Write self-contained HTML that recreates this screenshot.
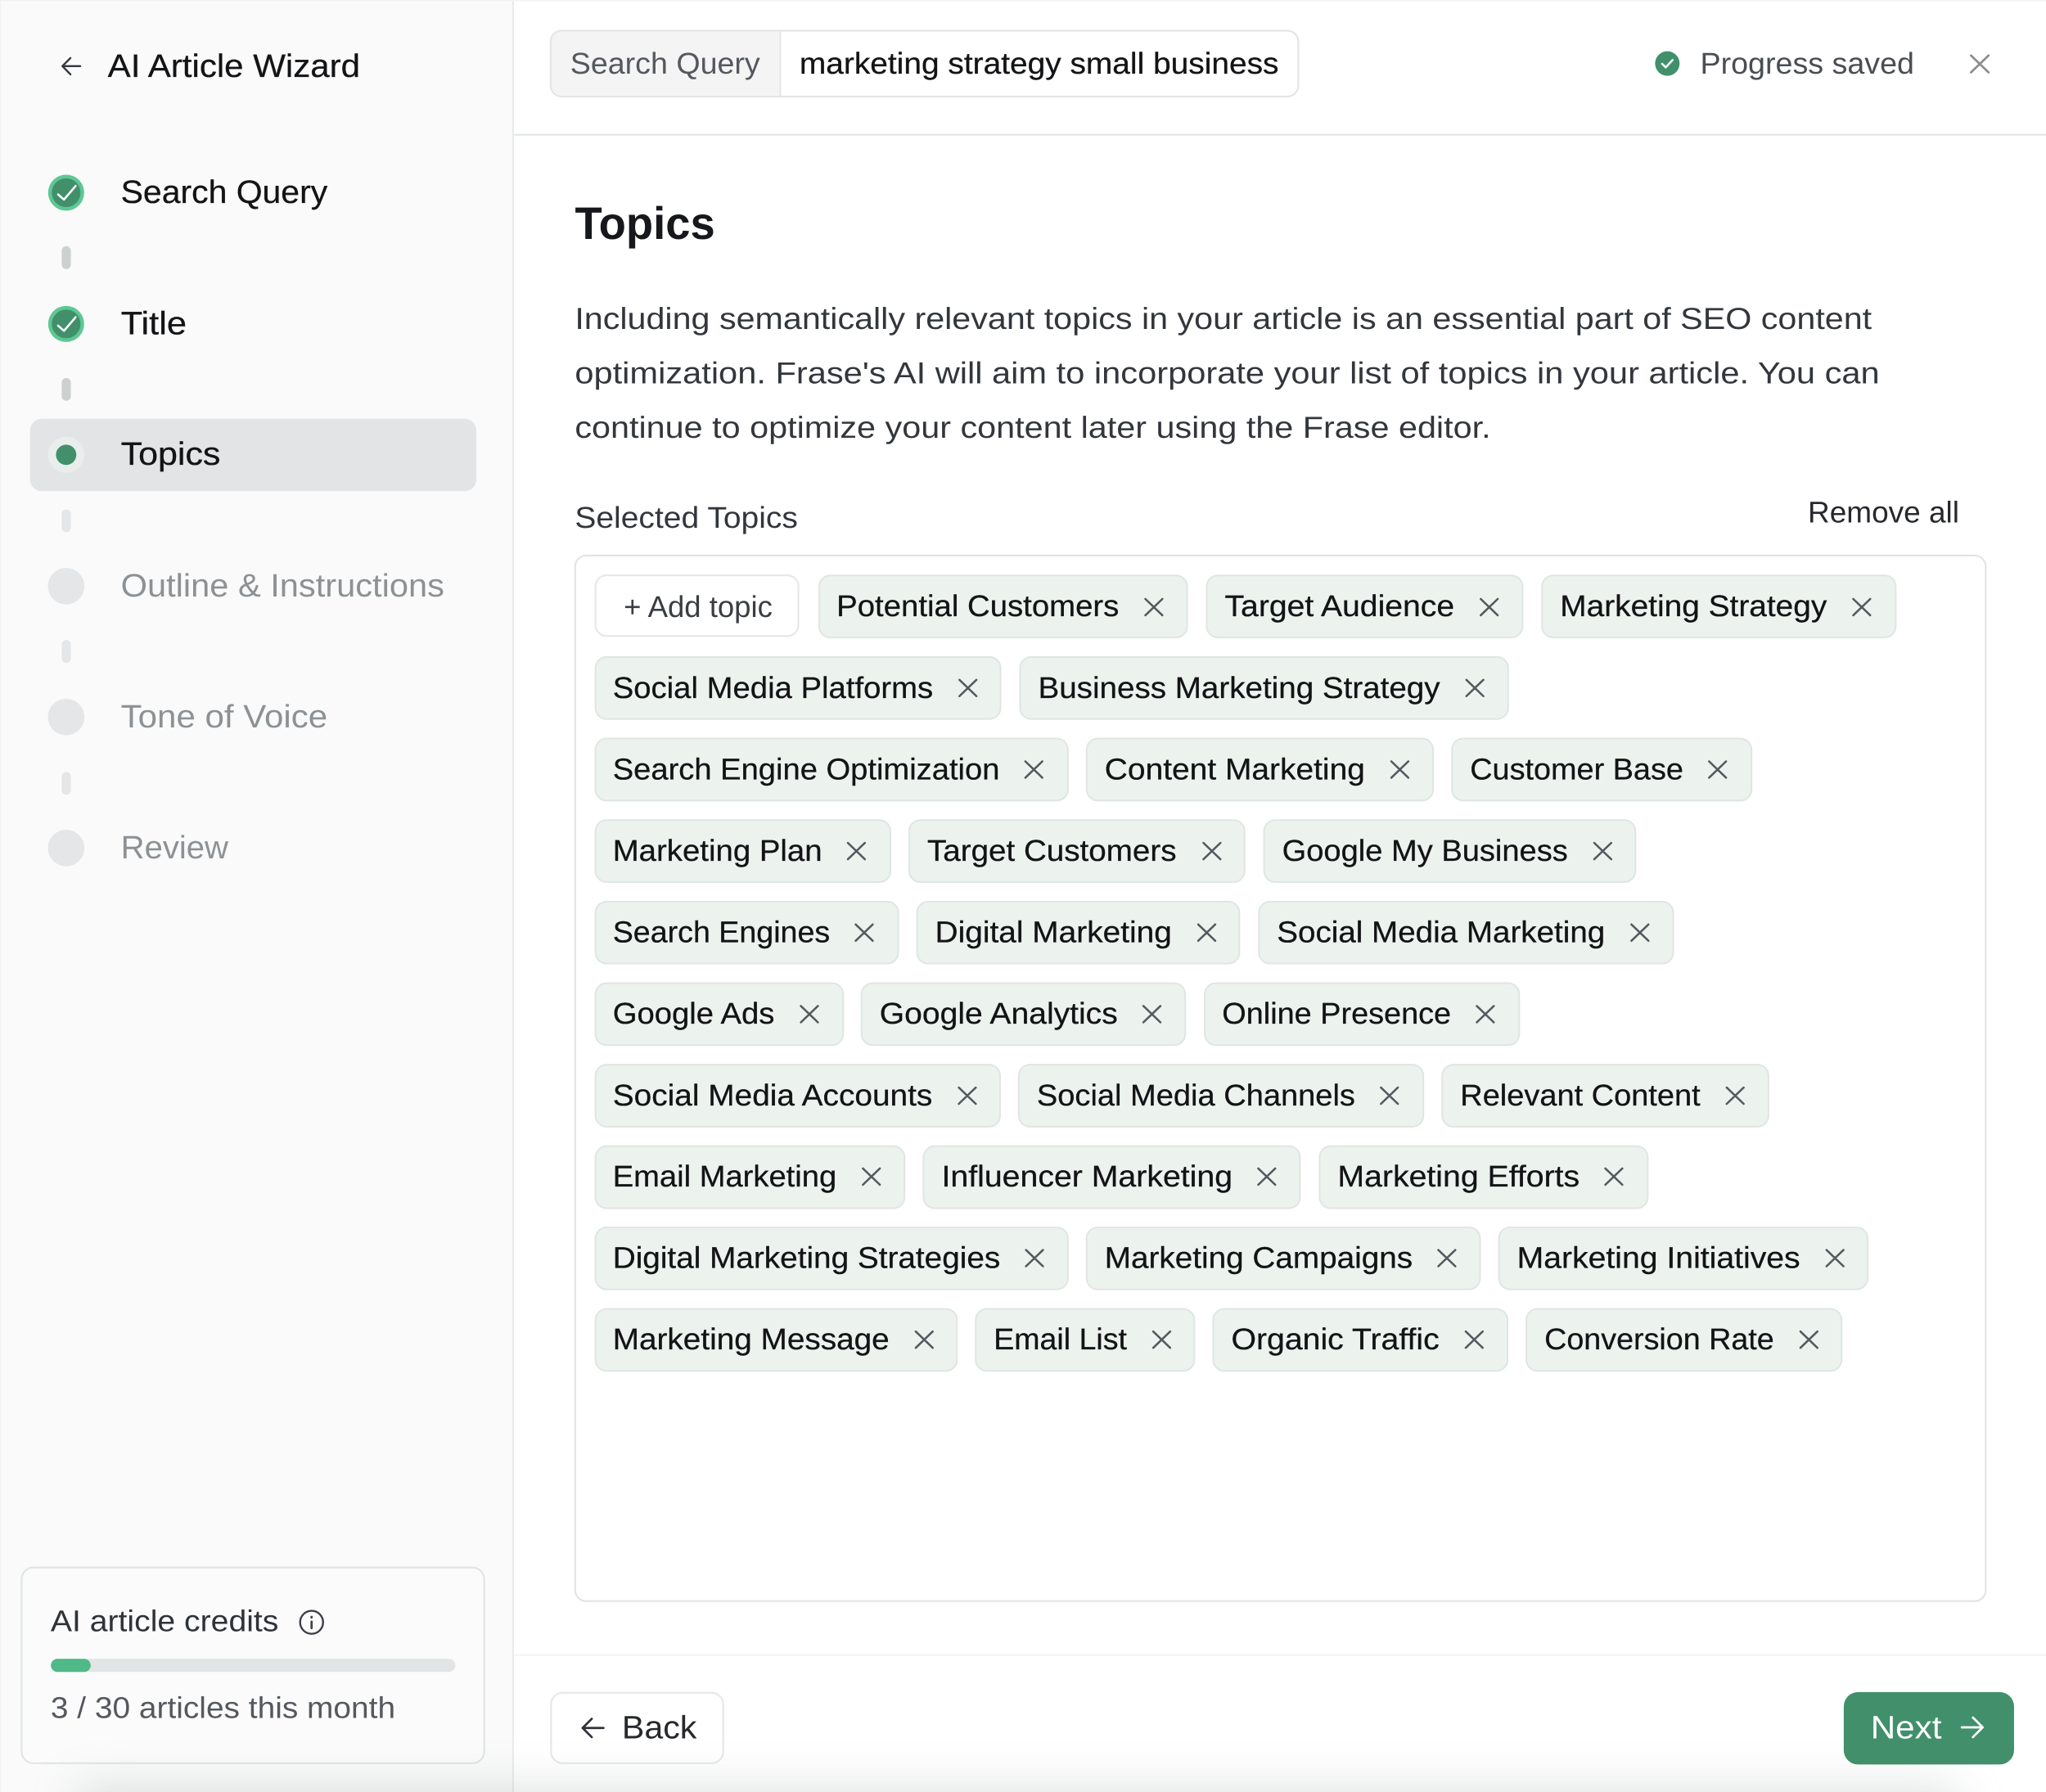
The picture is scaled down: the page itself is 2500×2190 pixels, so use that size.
<!DOCTYPE html>
<html lang="en">
<head>
<meta charset="utf-8">
<title>AI Article Wizard</title>
<style>
html,body{margin:0;padding:0;background:#fff;width:2500px;height:2190px;overflow:hidden}
svg{display:block}
text{font-family:"Liberation Sans",Arial,sans-serif;font-size:23px;text-rendering:geometricPrecision;fill:#131416}
.c rect{fill:#ecf3ef;stroke:#e0e6e3;stroke-width:1.3}
.x{fill:none;stroke:#55585d;stroke-width:1.6;stroke-linecap:round}
.n{font-size:24.8px}
.d{stroke:#131416;stroke-width:.18}
.m{fill:#8d9194}
.p{fill:#33363b;font-size:23.3px}
.g{fill:#55585e}
</style>
</head>
<body>
<svg xmlns="http://www.w3.org/2000/svg" width="2500" height="2190" viewBox="0 0 1568 1373.57" preserveAspectRatio="none">
<defs>
<filter id="b" x="-20%" y="-300%" width="140%" height="700%"><feGaussianBlur stdDeviation="18"/></filter>
</defs>
<rect width="1568" height="1374" fill="#fff"/>
<!-- sidebar -->
<rect x="0" y="0" width="393" height="1374" fill="#fafafa"/>
<rect x="392.6" y="0" width="1.2" height="1374" fill="#e6eaea"/>
<rect x="0" y="0" width="1568" height="1" fill="#f1f2f2"/>
<rect x="0" y="0" width="1" height="1374" fill="#f1f2f2"/>
<path d="M61.5 50.7H48M54 44.5L47.8 50.7L54 57" fill="none" stroke="#33363b" stroke-width="1.5" stroke-linecap="round" stroke-linejoin="round"/>
<text x="82.6" y="59" class="n d" textLength="193.4" lengthAdjust="spacingAndGlyphs">AI Article Wizard</text>

<circle cx="50.7" cy="147.7" r="13.8" fill="#5ec793"/><circle cx="50.7" cy="147.7" r="11" fill="#41906b"/>
<path d="M44.5 149L49 153L58 142.5" fill="none" stroke="#fff" stroke-width="1.6" stroke-linecap="round" stroke-linejoin="round"/>
<text x="92.6" y="155.6" class="n d" textLength="158.4" lengthAdjust="spacingAndGlyphs">Search Query</text>
<rect x="47.3" y="188.7" width="7" height="17.6" rx="3.5" fill="#ccd1cf"/>

<circle cx="50.7" cy="248.3" r="13.8" fill="#5ec793"/><circle cx="50.7" cy="248.3" r="11" fill="#41906b"/>
<path d="M44.5 249.6L49 253.6L58 243.1" fill="none" stroke="#fff" stroke-width="1.6" stroke-linecap="round" stroke-linejoin="round"/>
<text x="92.6" y="256.2" class="n d" textLength="50.4" lengthAdjust="spacingAndGlyphs">Title</text>
<rect x="47.3" y="289.8" width="7" height="17.4" rx="3.5" fill="#ccd1cf"/>

<rect x="23" y="321" width="342" height="55.5" rx="9" fill="#e3e4e6"/>
<circle cx="50.7" cy="348.6" r="13.8" fill="#e9eeec"/><circle cx="50.7" cy="348.6" r="7.8" fill="#41906b"/>
<text x="92.6" y="356.4" class="n d" textLength="76.4" lengthAdjust="spacingAndGlyphs">Topics</text>
<rect x="47.3" y="390.5" width="7" height="17.5" rx="3.5" fill="#e5e6e8"/>

<circle cx="50.7" cy="449.3" r="14" fill="#e5e6e8"/>
<text x="92.6" y="457.2" class="n m" textLength="247.9" lengthAdjust="spacingAndGlyphs">Outline &amp; Instructions</text>
<rect x="47.3" y="490.6" width="7" height="17.5" rx="3.5" fill="#e5e6e8"/>
<circle cx="50.7" cy="549.6" r="14" fill="#e5e6e8"/>
<text x="92.6" y="557.6" class="n m" textLength="158.4" lengthAdjust="spacingAndGlyphs">Tone of Voice</text>
<rect x="47.3" y="591.7" width="7" height="17.5" rx="3.5" fill="#e5e6e8"/>
<circle cx="50.7" cy="650" r="14" fill="#e5e6e8"/>
<text x="92.6" y="658" class="n m" textLength="82.4" lengthAdjust="spacingAndGlyphs">Review</text>

<!-- credits -->
<rect x="16.6" y="1201.5" width="354.5" height="150" rx="9" fill="#fbfbfb" stroke="#e0e5e4" stroke-width="1.4"/>
<text x="38.8" y="1250.3" textLength="174.7" lengthAdjust="spacingAndGlyphs" style="fill:#2f3237">AI article credits</text>
<circle cx="238.8" cy="1243.5" r="8.8" fill="none" stroke="#3d4045" stroke-width="1.5"/>
<path d="M238.8 1243v5M238.8 1239.3v.5" fill="none" stroke="#3d4045" stroke-width="1.7" stroke-linecap="round"/>
<rect x="39" y="1271.5" width="310" height="10" rx="5" fill="#e2e4e5"/>
<rect x="39" y="1271.5" width="30.5" height="10" rx="5" fill="#4fb987"/>
<text x="38.8" y="1316.8" class="g" textLength="264.2" lengthAdjust="spacingAndGlyphs">3 / 30 articles this month</text>

<!-- header -->
<rect x="394" y="102.6" width="1174" height="1.4" fill="#e3e7e6"/>
<rect x="422" y="23.5" width="573" height="50.5" rx="8.5" fill="#fff" stroke="#e2e6e5" stroke-width="1.4"/>
<path d="M598 24.2H430.5a7.8 7.8 0 0 0-7.8 7.8V65.5a7.8 7.8 0 0 0 7.8 7.8H598Z" fill="#f4f4f4"/>
<rect x="597.4" y="24" width="1.2" height="49.5" fill="#e2e6e5"/>
<text x="437" y="56.4" class="g" textLength="145.5" lengthAdjust="spacingAndGlyphs">Search Query</text>
<text x="612.7" y="56.4" class="d" textLength="367.3" lengthAdjust="spacingAndGlyphs">marketing strategy small business</text>
<circle cx="1277.8" cy="48.7" r="9.4" fill="#41906b"/>
<path d="M1273.8 48.9L1276.6 51.6L1281.8 46" fill="none" stroke="#fff" stroke-width="1.6" stroke-linecap="round" stroke-linejoin="round"/>
<text x="1303" y="56.4" textLength="164" lengthAdjust="spacingAndGlyphs" style="fill:#4a4d53">Progress saved</text>
<path d="M1510.5 42.5L1524 55.5M1524 42.5L1510.5 55.5" fill="none" stroke="#8b8d90" stroke-width="1.7" stroke-linecap="round"/>

<!-- content -->
<text x="440.6" y="183" textLength="107.4" lengthAdjust="spacingAndGlyphs" style="font-size:35px;font-weight:700;fill:#17181b">Topics</text>
<text x="440.5" y="252.2" class="p" textLength="994" lengthAdjust="spacingAndGlyphs">Including semantically relevant topics in your article is an essential part of SEO content</text>
<text x="440.5" y="293.8" class="p" textLength="1000" lengthAdjust="spacingAndGlyphs">optimization. Frase's AI will aim to incorporate your list of topics in your article. You can</text>
<text x="440.5" y="335.6" class="p" textLength="702" lengthAdjust="spacingAndGlyphs">continue to optimize your content later using the Frase editor.</text>
<text x="440.5" y="404.4" textLength="171" lengthAdjust="spacingAndGlyphs" style="fill:#33363b">Selected Topics</text>
<text x="1385.5" y="400.4" textLength="116" lengthAdjust="spacingAndGlyphs" style="fill:#26282c">Remove all</text>
<rect x="440.8" y="425.8" width="1081" height="801.5" rx="8.5" fill="#fff" stroke="#e2e6e5" stroke-width="1.4"/>

<rect x="456.4" y="441" width="155.5" height="46.5" rx="8.5" fill="#fff" stroke="#e6e9e8" stroke-width="1.4"/>
<text x="478" y="472.8" textLength="114" lengthAdjust="spacingAndGlyphs" style="fill:#3a3d42">+ Add topic</text>

<g class="c" transform="translate(-.2,-.2)">
<rect x="628" y="441.3" width="282" height="47.5" rx="8.5"/><rect x="925" y="441.3" width="242" height="47.5" rx="8.5"/><rect x="1182" y="441.3" width="271" height="47.5" rx="8.5"/>
<rect x="456.6" y="503.8" width="310.4" height="47.5" rx="8.5"/><rect x="782" y="503.8" width="374" height="47.5" rx="8.5"/>
<rect x="456.6" y="566.3" width="362" height="47.5" rx="8.5"/><rect x="833" y="566.3" width="265.5" height="47.5" rx="8.5"/><rect x="1113" y="566.3" width="229.5" height="47.5" rx="8.5"/>
<rect x="456.6" y="628.8" width="226" height="47.5" rx="8.5"/><rect x="697" y="628.8" width="257" height="47.5" rx="8.5"/><rect x="969" y="628.8" width="284.5" height="47.5" rx="8.5"/>
<rect x="456.6" y="691.3" width="232" height="47.5" rx="8.5"/><rect x="703" y="691.3" width="247" height="47.5" rx="8.5"/><rect x="965" y="691.3" width="317.5" height="47.5" rx="8.5"/>
<rect x="456.6" y="753.8" width="189.8" height="47.5" rx="8.5"/><rect x="660.5" y="753.8" width="248" height="47.5" rx="8.5"/><rect x="923.5" y="753.8" width="241" height="47.5" rx="8.5"/>
<rect x="456.6" y="816.3" width="310" height="47.5" rx="8.5"/><rect x="781" y="816.3" width="310" height="47.5" rx="8.5"/><rect x="1105.5" y="816.3" width="250" height="47.5" rx="8.5"/>
<rect x="456.6" y="878.8" width="236.8" height="47.5" rx="8.5"/><rect x="708" y="878.8" width="288.5" height="47.5" rx="8.5"/><rect x="1011.5" y="878.8" width="251.5" height="47.5" rx="8.5"/>
<rect x="456.6" y="941" width="362" height="47.5" rx="8.5"/><rect x="833" y="941" width="301.5" height="47.5" rx="8.5"/><rect x="1149" y="941" width="282.5" height="47.5" rx="8.5"/>
<rect x="456.6" y="1003.5" width="277" height="47.5" rx="8.5"/><rect x="748" y="1003.5" width="167.5" height="47.5" rx="8.5"/><rect x="930" y="1003.5" width="225.5" height="47.5" rx="8.5"/><rect x="1170" y="1003.5" width="241.5" height="47.5" rx="8.5"/>
</g>

<g class="d" transform="translate(-.4,-.6)">
<text x="641.5" y="473" textLength="216.5" lengthAdjust="spacingAndGlyphs">Potential Customers</text>
<text x="939" y="473" textLength="176" lengthAdjust="spacingAndGlyphs">Target Audience</text>
<text x="1196" y="473" textLength="204.5" lengthAdjust="spacingAndGlyphs">Marketing Strategy</text>
<text x="470" y="535.5" textLength="245.5" lengthAdjust="spacingAndGlyphs">Social Media Platforms</text>
<text x="796" y="535.5" textLength="308" lengthAdjust="spacingAndGlyphs">Business Marketing Strategy</text>
<text x="470" y="598" textLength="296.5" lengthAdjust="spacingAndGlyphs">Search Engine Optimization</text>
<text x="847" y="598" textLength="199.5" lengthAdjust="spacingAndGlyphs">Content Marketing</text>
<text x="1127" y="598" textLength="163.5" lengthAdjust="spacingAndGlyphs">Customer Base</text>
<text x="470" y="660.3" textLength="160.5" lengthAdjust="spacingAndGlyphs">Marketing Plan</text>
<text x="711" y="660.3" textLength="191" lengthAdjust="spacingAndGlyphs">Target Customers</text>
<text x="983" y="660.3" textLength="219" lengthAdjust="spacingAndGlyphs">Google My Business</text>
<text x="470" y="722.8" textLength="166.5" lengthAdjust="spacingAndGlyphs">Search Engines</text>
<text x="717" y="722.8" textLength="181.5" lengthAdjust="spacingAndGlyphs">Digital Marketing</text>
<text x="979" y="722.8" textLength="251.5" lengthAdjust="spacingAndGlyphs">Social Media Marketing</text>
<text x="470" y="785.3" textLength="124" lengthAdjust="spacingAndGlyphs">Google Ads</text>
<text x="674.5" y="785.3" textLength="182.5" lengthAdjust="spacingAndGlyphs">Google Analytics</text>
<text x="937" y="785.3" textLength="175.5" lengthAdjust="spacingAndGlyphs">Online Presence</text>
<text x="470" y="848" textLength="245" lengthAdjust="spacingAndGlyphs">Social Media Accounts</text>
<text x="795" y="848" textLength="244" lengthAdjust="spacingAndGlyphs">Social Media Channels</text>
<text x="1119.5" y="848" textLength="184" lengthAdjust="spacingAndGlyphs">Relevant Content</text>
<text x="470" y="910" textLength="171.5" lengthAdjust="spacingAndGlyphs">Email Marketing</text>
<text x="722" y="910" textLength="223" lengthAdjust="spacingAndGlyphs">Influencer Marketing</text>
<text x="1025.5" y="910" textLength="185.5" lengthAdjust="spacingAndGlyphs">Marketing Efforts</text>
<text x="470" y="972.4" textLength="297" lengthAdjust="spacingAndGlyphs">Digital Marketing Strategies</text>
<text x="847" y="972.4" textLength="236" lengthAdjust="spacingAndGlyphs">Marketing Campaigns</text>
<text x="1163" y="972.4" textLength="217" lengthAdjust="spacingAndGlyphs">Marketing Initiatives</text>
<text x="470" y="1035" textLength="212" lengthAdjust="spacingAndGlyphs">Marketing Message</text>
<text x="762" y="1035" textLength="102" lengthAdjust="spacingAndGlyphs">Email List</text>
<text x="944" y="1035" textLength="159.5" lengthAdjust="spacingAndGlyphs">Organic Traffic</text>
<text x="1184" y="1035" textLength="176" lengthAdjust="spacingAndGlyphs">Conversion Rate</text>
</g>

<path class="x" transform="translate(-.2,-.4)" d="M878 459.5l13 12.5m0-12.5l-13 12.5M1135 459.5l13 12.5m0-12.5l-13 12.5M1420.5 459.5l13 12.5m0-12.5l-13 12.5
M735.5 521.5l13 12.5m0-12.5l-13 12.5M1124 521.5l13 12.5m0-12.5l-13 12.5
M786 584l13 12.5m0-12.5l-13 12.5M1066.5 584l13 12.5m0-12.5l-13 12.5M1310 584l13 12.5m0-12.5l-13 12.5
M650 646.5l13 12.5m0-12.5l-13 12.5M922.5 646.5l13 12.5m0-12.5l-13 12.5M1222 646.5l13 12.5m0-12.5l-13 12.5
M656 709l13 12.5m0-12.5l-13 12.5M918.5 709l13 12.5m0-12.5l-13 12.5M1250.5 709l13 12.5m0-12.5l-13 12.5
M614 771.5l13 12.5m0-12.5l-13 12.5M876.5 771.5l13 12.5m0-12.5l-13 12.5M1132 771.5l13 12.5m0-12.5l-13 12.5
M735 834l13 12.5m0-12.5l-13 12.5M1058.5 834l13 12.5m0-12.5l-13 12.5M1323.5 834l13 12.5m0-12.5l-13 12.5
M661.5 896l13 12.5m0-12.5l-13 12.5M964.5 896l13 12.5m0-12.5l-13 12.5M1230.5 896l13 12.5m0-12.5l-13 12.5
M786.5 958.5l13 12.5m0-12.5l-13 12.5M1102.5 958.5l13 12.5m0-12.5l-13 12.5M1400 958.5l13 12.5m0-12.5l-13 12.5
M702 1021l13 12.5m0-12.5l-13 12.5M884 1021l13 12.5m0-12.5l-13 12.5M1123.5 1021l13 12.5m0-12.5l-13 12.5M1380 1021l13 12.5m0-12.5l-13 12.5"/>

<!-- footer -->
<rect x="394" y="1268" width="1174" height="1.2" fill="#f2f3f3"/>
<rect x="422.3" y="1297.5" width="132" height="54" rx="9" fill="#fff" stroke="#e6e9e8" stroke-width="1.4"/>
<path d="M462.5 1324.5H447M453.5 1317.5L446.5 1324.5L453.5 1331.5" fill="none" stroke="#2f3237" stroke-width="1.7" stroke-linecap="round" stroke-linejoin="round"/>
<text x="476.6" y="1332.6" textLength="57.4" lengthAdjust="spacingAndGlyphs" style="font-size:24.8px;fill:#26282c">Back</text>

<!-- bottom shadow -->
<rect x="60" y="1372" width="1440" height="40" fill="#9aa5a3" opacity=".35" filter="url(#b)"/>

<rect x="1413" y="1297" width="130.5" height="55.5" rx="11" fill="#41906b"/>
<text x="1433.6" y="1332.6" textLength="54.4" lengthAdjust="spacingAndGlyphs" style="font-size:24.8px;fill:#fff">Next</text>
<path d="M1503.5 1324H1519M1512 1316.5L1519.5 1324L1512 1331.5" fill="none" stroke="#fff" stroke-width="1.7" stroke-linecap="round" stroke-linejoin="round"/>
</svg>
</body>
</html>
